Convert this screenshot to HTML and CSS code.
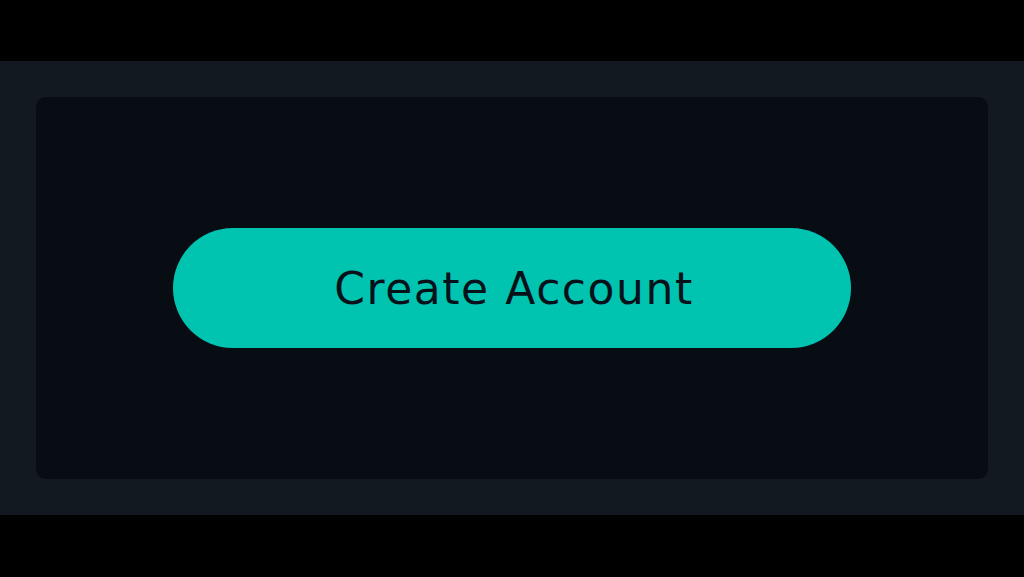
FILE: index.html
```html
<!DOCTYPE html>
<html lang="en">
<head>
    <meta charset="UTF-8">
    <meta name="viewport" content="width=device-width, initial-scale=1.0">
    <title>Create Account</title>
    <link rel="stylesheet" href="styles.css">
</head>
<body>
    <div class="band">
        <div class="panel">
            <button class="cta">Create Account</button>
        </div>
    </div>
</body>
</html>
```

FILE: styles.css
```css
html, body {
    margin: 0;
    background: #000000;
}
body {
    padding-top: 61px;
    font-family: "DejaVu Sans", "Open Sans", sans-serif;
}
.band {
    background: #131920;
    padding: 36px;
}
.panel {
    height: 382px;
    background: #070d13;
    border-radius: 10px;
    display: flex;
    align-items: center;
    justify-content: center;
}
.cta {
    width: 678px;
    height: 120px;
    padding: 0 0 0 4px;
    border: none;
    border-radius: 60px;
    background: #00c4b0;
    color: #07111a;
    font-family: "DejaVu Sans", "Open Sans", sans-serif;
    font-size: 44px;
    font-weight: 400;
    letter-spacing: 1.55px;
    cursor: pointer;
}
```
